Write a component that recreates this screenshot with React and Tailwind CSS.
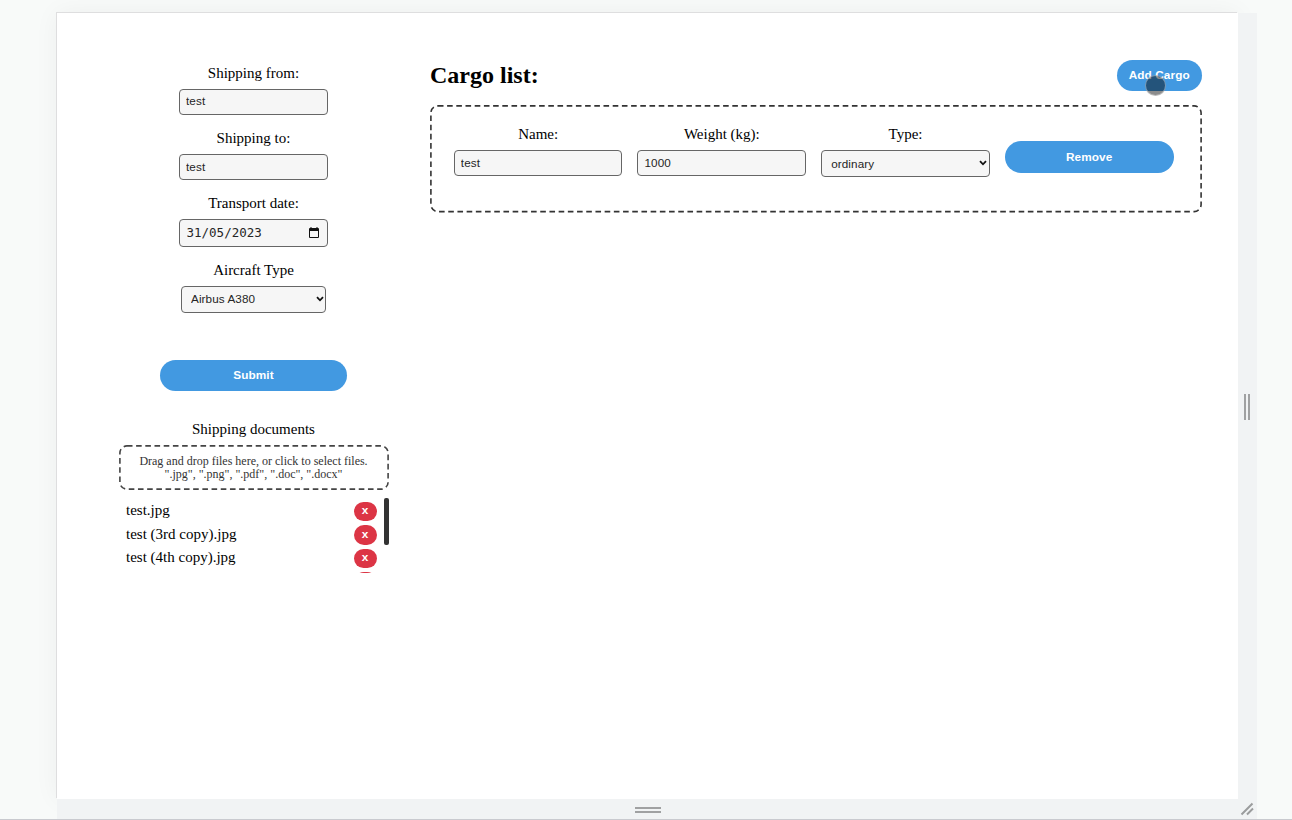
import React from "react";

const SERIF = "font-['Liberation_Serif',serif]";
const FIELD =
  "block w-full appearance-none rounded-[4px] border border-[#666] bg-[#f6f6f6] px-[6px] font-['Liberation_Sans',sans-serif] text-[11.7px] tracking-[0.1px] text-[#252525] outline-none";
const BUTTON =
  "flex items-center justify-center rounded-full bg-[#4299e1] pt-[1px] font-['Liberation_Sans',sans-serif] text-[11.8px] tracking-[0.08px] font-bold text-white";

function Label({ children }) {
  return <span className="block h-[18px] text-center text-[15px] leading-[18px] whitespace-nowrap text-black">{children}</span>;
}

function Select({ value, className, fieldClass = "" }) {
  return (
    <div className={`relative ${className}`}>
      <select defaultValue={value} className={`${FIELD} h-full pl-[9px] ${fieldClass}`}>
        <option>{value}</option>
      </select>
      <svg className="pointer-events-none absolute top-[9.5px] right-[2.5px] h-[6px] w-[8px]" viewBox="0 0 8 6" fill="none" stroke="#111" strokeWidth="1.8">
        <path d="M1 1.2 4 4.3 7 1.2" />
      </svg>
    </div>
  );
}

function ShippingForm() {
  return (
    <form className="flex flex-col items-center">
      <Label>Shipping from:</Label>
      <div className="mt-[7px] w-[149px]">
        <input className={`${FIELD} h-[26px] pb-[3px]`} defaultValue="test" />
      </div>
      <div className="mt-[14px]"><Label>Shipping to:</Label></div>
      <div className="mt-[7px] w-[149px]">
        <input className={`${FIELD} h-[26px] pb-[2px]`} defaultValue="test" />
      </div>
      <div className="mt-[14px]"><Label>Transport date:</Label></div>
      <div className="relative mt-[7px] w-[149px]">
        <input
          className="block h-[28px] w-full rounded-[4px] border border-[#666] bg-[#f6f6f6] px-[6.5px] pt-0 pb-[2px] font-['DejaVu_Sans_Mono',monospace] text-[12.5px] text-[#252525] outline-none"
          defaultValue="31/05/2023"
        />
        <svg className="absolute top-[8px] right-[9.5px] h-[11px] w-[10px]" viewBox="0 0 10 11">
          <path fill="#111" fillRule="evenodd" d="M1.5 0h1v1h5V0h1v1H9a1 1 0 0 1 1 1v8a1 1 0 0 1-1 1H1a1 1 0 0 1-1-1V2a1 1 0 0 1 1-1h.5zM1 4v6h8V4z" />
        </svg>
      </div>
      <div className="mt-[14px]"><Label>Aircraft Type</Label></div>
      <Select value="Airbus A380" className="mt-[7px] h-[26.5px] w-[145px]" fieldClass="pb-[1px]" />
      <button type="button" className={`${BUTTON} mt-[47px] h-[31.5px] w-[187.5px]`}>Submit</button>
    </form>
  );
}

function DeleteRow({ name }) {
  return (
    <li className="flex h-[23.5px] items-center justify-between">
      <span className="text-[15px] leading-[18px] text-black">{name}</span>
      <button type="button" className="relative top-[1.2px] flex h-[19.5px] w-[23px] shrink-0 items-center justify-center rounded-full bg-[#dc3545] font-['Liberation_Sans',sans-serif] text-[11.8px] font-bold text-white">
        {name && "x"}
      </button>
    </li>
  );
}

function Documents() {
  return (
    <section className="mt-[29px]">
      <Label>Shipping documents</Label>
      <div className="relative mt-[7px] h-[45px] pt-[10px] text-center text-[12px] leading-[13px] whitespace-nowrap text-[#333]">
        <DashedFrame width={270} height={45} color="#444" />
        <p>Drag and drop files here, or click to select files.</p>
        <p>".jpg", ".png", ".pdf", ".doc", ".docx"</p>
      </div>
      <div className="mt-[7px] flex h-[76px] justify-between overflow-hidden">
        <ul className="w-[258px] pt-[1.4px] pl-[7.5px]">
          <DeleteRow name="test.jpg" />
          <DeleteRow name="test (3rd copy).jpg" />
          <DeleteRow name="test (4th copy).jpg" />
          <DeleteRow name="" />
        </ul>
        <div className="mt-[0.5px] h-[47.5px] w-[4.5px] rounded-[2px] bg-[#333]" />
      </div>
    </section>
  );
}

function DashedFrame({ width, height, color }) {
  return (
    <svg className="absolute inset-0" width={width} height={height} fill="none">
      <rect x="0.9" y="0.9" width={width - 1.8} height={height - 1.8} rx="7" stroke={color} strokeWidth="1.6" strokeDasharray="5.6 3.6" />
    </svg>
  );
}

function CargoList() {
  return (
    <main className="w-[772px]">
      <header className="flex h-[32px] items-center justify-between">
        <h2 className="text-[24px] leading-[28px] font-bold text-black">Cargo list:</h2>
        <div className="relative top-[0.4px]">
          <button type="button" className={`${BUTTON} h-[31.5px] w-[85.5px]`}>Add Cargo</button>
          <span className="absolute top-[15px] left-[28.5px] size-[21px] rounded-full border border-white/40 bg-black/45" />
        </div>
      </header>
      <section className="relative mt-[14px] flex h-[107.5px] gap-[15px] pt-[20px] pl-[23.8px]">
        <DashedFrame width={772} height={107.5} color="#333" />
        <div className="w-[168.7px]">
          <Label>Name:</Label>
          <input className={`${FIELD} mt-[7px] h-[26px] pb-[2px]`} defaultValue="test" />
        </div>
        <div className="w-[168.7px]">
          <Label>Weight (kg):</Label>
          <input className={`${FIELD} mt-[7px] h-[26px] pb-[2px]`} defaultValue="1000" />
        </div>
        <div className="w-[168.7px]">
          <Label>Type:</Label>
          <Select value="ordinary" className="mt-[7px] h-[27px] w-full" fieldClass="pt-[1px]" />
        </div>
        <button type="button" className={`${BUTTON} mt-[16px] h-[32px] w-[168.7px]`}>Remove</button>
      </section>
    </main>
  );
}

export default function App() {
  return (
    <div className="h-[820px] w-[1292px] overflow-hidden border-b border-[#c9cacf] bg-[#f8faf9] pt-[13px] pl-[57px]">
      <div className="grid h-[806px] w-[1200px] grid-cols-[1181px_19px] grid-rows-[786px_20px]">
        <div className={`flex bg-white pt-[46px] pl-[61.5px] shadow-[-1px_-1px_0_#dededf,0_0_24px_rgba(0,0,0,0.05)] ${SERIF}`}>
          <aside className="mr-[41.5px] w-[270px] pt-[5px]">
            <ShippingForm />
            <Documents />
          </aside>
          <CargoList />
        </div>
        <div className="relative flex items-center justify-center gap-[2px] bg-[#f1f3f4] pt-[2px] pr-[2px]">
          <i className="h-[26px] w-[2px] bg-[#a0a1a2]" />
          <i className="h-[26px] w-[2px] bg-[#a0a1a2]" />
        </div>
        <div className="relative flex flex-col items-center justify-center gap-[2px] bg-[#f1f3f4] pt-[2px] pl-[1px]">
          <i className="h-[2px] w-[26px] bg-[#a0a1a2]" />
          <i className="h-[2px] w-[26px] bg-[#a0a1a2]" />
        </div>
        <div className="relative bg-[#f1f3f4] pt-[3px] pl-[2px]">
          <svg className="size-[15px]" viewBox="0 0 15 15" stroke="#9b9c9d" strokeWidth="2">
            <path d="M1.5 12.5 12.5 1.5M7 12.5 13 6.5" />
          </svg>
        </div>
      </div>
    </div>
  );
}
